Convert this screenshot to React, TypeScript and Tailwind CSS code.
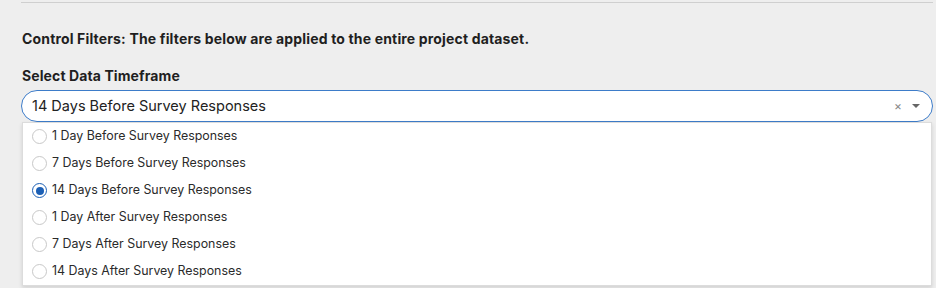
import React from "react";

const options = [
  "1 Day Before Survey Responses",
  "7 Days Before Survey Responses",
  "14 Days Before Survey Responses",
  "1 Day After Survey Responses",
  "7 Days After Survey Responses",
  "14 Days After Survey Responses",
];

export default function App() {
  const selected = 2;
  return (
    <div
      className="w-[936px] h-[288px] overflow-hidden bg-[#eeeeee] text-[#1f1f1f]"
      style={{ fontFamily: "Inter, 'Noto Sans', sans-serif" }}
    >
      <div className="pl-[21px] pr-[3px]">
        <div className="mt-[2px] h-px bg-[#cfcfcf]" />
        <div className="pt-[26px] pl-px text-[14px] leading-[20px] font-bold tracking-[0.16px]">
          Control Filters: The filters below are applied to the entire project dataset.
        </div>
        <div className="pt-[17px] pl-px text-[14px] leading-[20px] font-bold tracking-[0.1px]">
          Select Data Timeframe
        </div>
        <div className="relative mt-[4px]">
          <div className="h-[32px] rounded-full border-[1.5px] border-[#3d7cc9] bg-white flex items-center pl-[10px] pr-[10px]">
            <span className="flex-1 text-[14.5px] text-[#222]">14 Days Before Survey Responses</span>
            <span className="text-[12px] text-[#888] mr-[10px] leading-none">×</span>
            <svg width="8" height="4" viewBox="0 0 8 4" className="mr-[2px]">
              <path d="M0 0 L8 0 L4 4 Z" fill="#666" />
            </svg>
          </div>
          <div className="ml-px mr-px bg-white border border-[#dcdcdc] shadow-[0_2px_4px_rgba(0,0,0,0.12)]">
            {options.map((o, i) => (
              <div key={o} className="h-[27px] flex items-center pl-[9px]">
                {i === selected ? (
                  <span className="w-[15px] h-[15px] rounded-full border-[1.5px] border-[#1b5fb5] flex items-center justify-center">
                    <span className="w-[8px] h-[8px] rounded-full bg-[#1b5fb5]" />
                  </span>
                ) : (
                  <span className="w-[15px] h-[15px] rounded-full border border-[#c8c8c8] bg-white" />
                )}
                <span className="ml-[5px] text-[12.4px] text-[#2a2a2a]">{o}</span>
              </div>
            ))}
          </div>
        </div>
      </div>
    </div>
  );
}
